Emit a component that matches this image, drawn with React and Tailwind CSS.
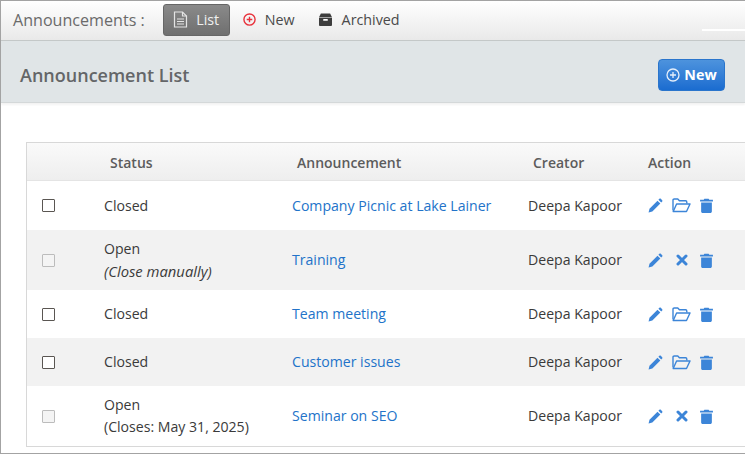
import React from "react";

const F = { fontFamily: '"Open Sans","Noto Sans",sans-serif' };

function Doc() {
  return (
    <svg width="15" height="17" viewBox="0 0 15 17" fill="none" stroke="#e4e4e4" strokeWidth="1.2">
      <path d="M1.5 1h8l4 4v11h-12z" />
      <path d="M9.5 1v4h4M4 8h7M4 10.5h7M4 13h7" />
    </svg>
  );
}
function PlusCircle({ color, size = 14, sw = 1.5 }) {
  return (
    <svg width={size} height={size} viewBox="0 0 14 14" fill="none" stroke={color} strokeWidth={sw}>
      <circle cx="7" cy="7" r="6" />
      <path d="M7 4v6M4 7h6" />
    </svg>
  );
}
function Box() {
  return (
    <svg width="15" height="13" viewBox="0 0 16 14">
      <path d="M3 0.5h10l2 4H1z" fill="#3d3d3d" />
      <path d="M1 5h14v8a1 1 0 0 1-1 1H2a1 1 0 0 1-1-1z" fill="#3d3d3d" />
      <rect x="5.5" y="6.5" width="5" height="1.8" rx="0.6" fill="#fff" />
    </svg>
  );
}
function Folder() {
  return (
    <svg width="19" height="15" viewBox="0 0 19 15" fill="none" stroke="#3c85d8" strokeWidth="1.4" strokeLinejoin="round">
      <path d="M1 12.5V2.2C1 1.5 1.5 1 2.2 1h3.6l1.6 1.8h6.2c.7 0 1.2.5 1.2 1.2v1.4" />
      <path d="M1.2 13.5h13.3L18 6H4.6z" />
    </svg>
  );
}
function Trash() {
  return (
    <svg width="13" height="15" viewBox="0 0 12 14">
      <path d="M4 0.6h4l.6 1H12v1.6H0V1.6h3.4z" fill="#3c85d8" />
      <path d="M1 4.2h10v8.4c0 .8-.6 1.4-1.4 1.4H2.4C1.6 14 1 13.4 1 12.6z" fill="#3c85d8" />
    </svg>
  );
}
function Pen() {
  return (
    <svg width="15" height="15" viewBox="0 0 15 15">
      <path d="M0.6 14.4l.9-3.7 8-8 2.8 2.8-8 8z" fill="#3c85d8" />
      <path d="M10.4 1.8l1-1c.4-.4 1-.4 1.4 0l1.4 1.4c.4.4.4 1 0 1.4l-1 1z" fill="#3c85d8" />
    </svg>
  );
}
function Cross() {
  return (
    <svg width="12" height="12" viewBox="0 0 12 12" stroke="#3c85d8" strokeWidth="3" strokeLinecap="round">
      <path d="M2 2l8 8M10 2l-8 8" />
    </svg>
  );
}

const rows = [
  { h: "h-[49px]", st: "Closed", t: "Company Picnic at Lake Lainer", dark: true, alt: false },
  { h: "h-[60px]", st: "Open", sub: "(Close manually)", it: true, t: "Training", dark: false, alt: true },
  { h: "h-[48px]", st: "Closed", t: "Team meeting", dark: true, alt: false },
  { h: "h-[48px]", st: "Closed", t: "Customer issues", dark: true, alt: true },
  { h: "h-[60px]", st: "Open", sub: "(Closes: May 31, 2025)", t: "Seminar on SEO", dark: false, alt: false },
];
const cols = "grid grid-cols-[71px_194px_236px_120px_1fr] items-center";

export default function App() {
  return (
    <div style={F} className="relative w-[745px] h-[454px] overflow-hidden bg-white border-t border-l border-b border-[#a3a3a3] flex flex-col text-[14.1px] text-[#3a3a3a]">
      <div className="h-[40px] shrink-0 flex items-center pl-[12px] bg-gradient-to-b from-white to-[#e9e9e9] border-b border-[#c4c8c8] text-[14.3px]">
        <span className="text-[16.1px] text-[#6a6a6a] mr-[18px]">Announcements :</span>
        <div className="w-[67px] h-[32px] mt-[-2px] rounded-[3px] bg-gradient-to-b from-[#8a8a8a] to-[#6f6f6f] border border-[#666] flex items-center justify-center gap-[8px] text-[#f0f0f0] mr-[13px]">
          <Doc /> List
        </div>
        <div className="flex items-center gap-[9px] mt-[-2px] text-[#4a4a4a] mr-[23px]">
          <PlusCircle color="#e8323c" size={13} /> New
        </div>
        <div className="flex items-center gap-[9px] mt-[-2px] text-[#4a4a4a]">
          <Box /> Archived
        </div>
      </div>
      <div className="absolute right-0 top-[28px] w-[43px] h-[2px] bg-white" />
      <div className="h-[62px] shrink-0 bg-[#e0e5e7] border-b border-[#d4d8d9] shadow-[0_2px_2px_rgba(0,0,0,0.05)] flex items-center justify-between pl-[19px] pr-[20px] pt-[6px]">
        <h1 className="text-[18px] font-semibold text-[#646668] mt-[2px]">Announcement List</h1>
        <button className="w-[67px] h-[32px] rounded-[4px] bg-gradient-to-b from-[#4d93dd] to-[#1a6cd0] border border-[#2a75cc] flex items-center justify-center gap-[4px] text-white font-bold text-[14.3px]">
          <PlusCircle color="#e6effa" size={14} sw={1.3} /> New
        </button>
      </div>
      <div className="ml-[25px] mt-[39px] border border-[#d8d8d8] border-r-0">
        <div className={`${cols} h-[38px] pt-[2px] bg-gradient-to-b from-[#fafafa] to-[#eeeeee] border-b border-[#e4e4e4] font-semibold text-[#5c5c5c] text-[14px]`}>
          <div />
          <div className="pl-[12px]">Status</div>
          <div className="pl-[5px]">Announcement</div>
          <div className="pl-[5px]">Creator</div>
          <div>Action</div>
        </div>
        {rows.map((r, i) => (
          <div key={i} className={`${cols} ${r.h} ${r.alt ? "bg-[#f2f2f2]" : "bg-white"}`}>
            <div className="pl-[15px]">
              <div className={`w-[13px] h-[13px] border-[1.5px] rounded-[1px] ${r.dark ? "border-[#5a5652] bg-white" : "border-[#bcbcbc] bg-[#f4f4f4]"}`} />
            </div>
            <div className="pl-[6px] leading-[22px]">
              <div>{r.st}</div>
              {r.sub && <div className={r.it ? "italic text-[14.8px]" : ""}>{r.sub}</div>}
            </div>
            <div className="text-[#2273c9]">{r.t}</div>
            <div>Deepa Kapoor</div>
            <div className="flex items-center">
              <div className="w-[24px]"><Pen /></div>
              <div className="w-[19px] mr-[9px] flex justify-center">{r.dark ? <Folder /> : <Cross />}</div>
              <Trash />
            </div>
          </div>
        ))}
      </div>
    </div>
  );
}
